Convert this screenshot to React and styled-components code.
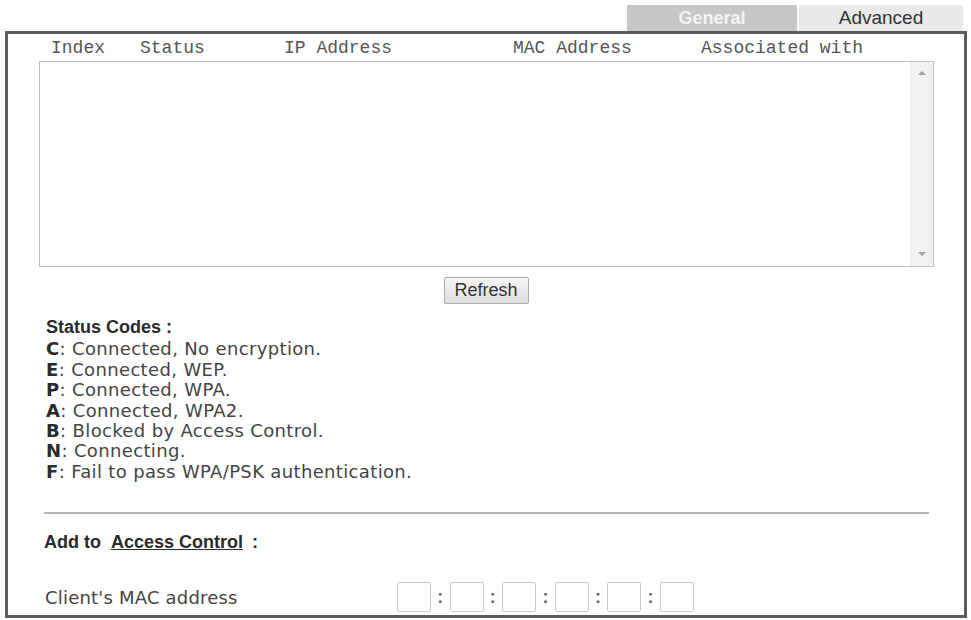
import styled, { createGlobalStyle } from 'styled-components';

const GlobalStyle = createGlobalStyle`
  body {
    margin: 0;
    background: #fff;
    font-family: 'DejaVu Sans', Verdana, sans-serif;
  }
`;

const Page = styled.div`
  width: 971px;
  padding: 5px 4px 0 5px;
  box-sizing: border-box;
`;

const TabRow = styled.div`
  display: flex;
  justify-content: flex-end;
  padding-right: 4px;
`;

const Tab = styled.div`
  width: ${(p) => (p.$active ? '170px' : '164px')};
  height: 26px;
  margin-left: 2px;
  display: flex;
  align-items: center;
  justify-content: center;
  font-family: 'Liberation Sans', Arial, sans-serif;
  font-size: ${(p) => (p.$active ? '18px' : '19px')};
  font-weight: ${(p) => (p.$active ? 'bold' : 'normal')};
  background: ${(p) => (p.$active ? '#c6c6c6' : '#e9e9e9')};
  color: ${(p) => (p.$active ? '#f4f4f4' : '#333')};
`;

const Panel = styled.div`
  border: 3px solid #5c5c5c;
  height: 587px;
  box-sizing: border-box;
  display: flex;
  flex-direction: column;
`;

const HeaderRow = styled.div`
  display: flex;
  height: 27px;
  align-items: center;
  padding-left: 43px;
  font-family: 'Liberation Mono', 'Courier New', monospace;
  font-size: 18px;
  color: #555;
  white-space: pre;
`;

const HeaderCell = styled.div`
  width: ${(p) => p.$w};
`;

const ListBox = styled.div`
  margin: 0 30px 0 31px;
  height: 206px;
  border: 1px solid #bdbdbd;
  box-sizing: border-box;
  display: flex;
  justify-content: flex-end;
`;

const ScrollBar = styled.div`
  width: 23px;
  background: #f1f1f1;
  display: flex;
  flex-direction: column;
  justify-content: space-between;
  align-items: center;
  padding: 9px 0 10px;
`;

const Arrow = styled.div`
  width: 0;
  height: 0;
  border-left: 4px solid transparent;
  border-right: 4px solid transparent;
  ${(p) => (p.$down ? 'border-top: 4px solid #a3a3a3;' : 'border-bottom: 4px solid #a3a3a3;')}
`;

const ButtonRow = styled.div`
  display: flex;
  justify-content: center;
  margin-top: 10px;
`;

const Button = styled.button`
  width: 85px;
  height: 27px;
  padding: 0;
  border: 1px solid #a9a9a9;
  border-radius: 2px;
  background: linear-gradient(#f6f6f6, #dedede);
  font-family: 'Liberation Sans', Arial, sans-serif;
  font-size: 18px;
  color: #333;
`;

const Codes = styled.div`
  padding-left: 38px;
  margin-top: 13px;
  font-size: 18px;
  line-height: 20.4px;
  letter-spacing: 0.35px;
  color: #444;
`;

const Title = styled.div`
  font-family: 'Liberation Sans', Arial, sans-serif;
  font-weight: bold;
  font-size: 18px;
  letter-spacing: 0;
  color: #2a2a2a;
  margin-bottom: 2px;
`;

const Code = styled.div`
  b {
    color: #2a2a2a;
  }
`;

const Divider = styled.div`
  margin: 30px 35px 0 36px;
  height: 2px;
  background: #b4b4b4;
`;

const AddTitle = styled.div`
  margin-top: 18px;
  padding-left: 36px;
  font-family: 'Liberation Sans', Arial, sans-serif;
  font-weight: bold;
  font-size: 18px;
  color: #2a2a2a;
  line-height: 20px;
`;

const Link = styled.span`
  text-decoration: underline;
  margin-left: 10px;
  margin-right: 9px;
`;

const MacRow = styled.div`
  display: flex;
  align-items: center;
  margin-top: 30px;
  padding-left: 37px;
  font-size: 18px;
  letter-spacing: 0.2px;
  color: #444;
`;

const MacLabel = styled.div`
  width: 352px;
`;

const MacBox = styled.div`
  width: 34px;
  height: 30px;
  border: 1px solid #c8c8c8;
  border-radius: 2px;
  box-sizing: border-box;
`;

const Colon = styled.div`
  width: 18.6px;
  text-align: center;
  font-family: 'Liberation Sans', Arial, sans-serif;
  font-weight: bold;
  color: #666;
`;

const codes = [
  ['C', 'Connected, No encryption.'],
  ['E', 'Connected, WEP.'],
  ['P', 'Connected, WPA.'],
  ['A', 'Connected, WPA2.'],
  ['B', 'Blocked by Access Control.'],
  ['N', 'Connecting.'],
  ['F', 'Fail to pass WPA/PSK authentication.'],
];

export default function App() {
  return (
    <Page>
      <GlobalStyle />
      <TabRow>
        <Tab $active>General</Tab>
        <Tab>Advanced</Tab>
      </TabRow>
      <Panel>
        <HeaderRow>
          <HeaderCell $w="89px">Index</HeaderCell>
          <HeaderCell $w="144px">Status</HeaderCell>
          <HeaderCell $w="229px">IP Address</HeaderCell>
          <HeaderCell $w="188px">MAC Address</HeaderCell>
          <HeaderCell>Associated with</HeaderCell>
        </HeaderRow>
        <ListBox>
          <ScrollBar>
            <Arrow />
            <Arrow $down />
          </ScrollBar>
        </ListBox>
        <ButtonRow>
          <Button>Refresh</Button>
        </ButtonRow>
        <Codes>
          <Title>Status Codes :</Title>
          {codes.map(([k, v]) => (
            <Code key={k}>
              <b>{k}</b>: {v}
            </Code>
          ))}
        </Codes>
        <Divider />
        <AddTitle>
          Add to<Link>Access Control</Link>:
        </AddTitle>
        <MacRow>
          <MacLabel>Client's MAC address</MacLabel>
          {[0, 1, 2, 3, 4, 5].map((i) => (
            <>
              {i > 0 && <Colon>:</Colon>}
              <MacBox key={i} />
            </>
          ))}
        </MacRow>
      </Panel>
    </Page>
  );
}
